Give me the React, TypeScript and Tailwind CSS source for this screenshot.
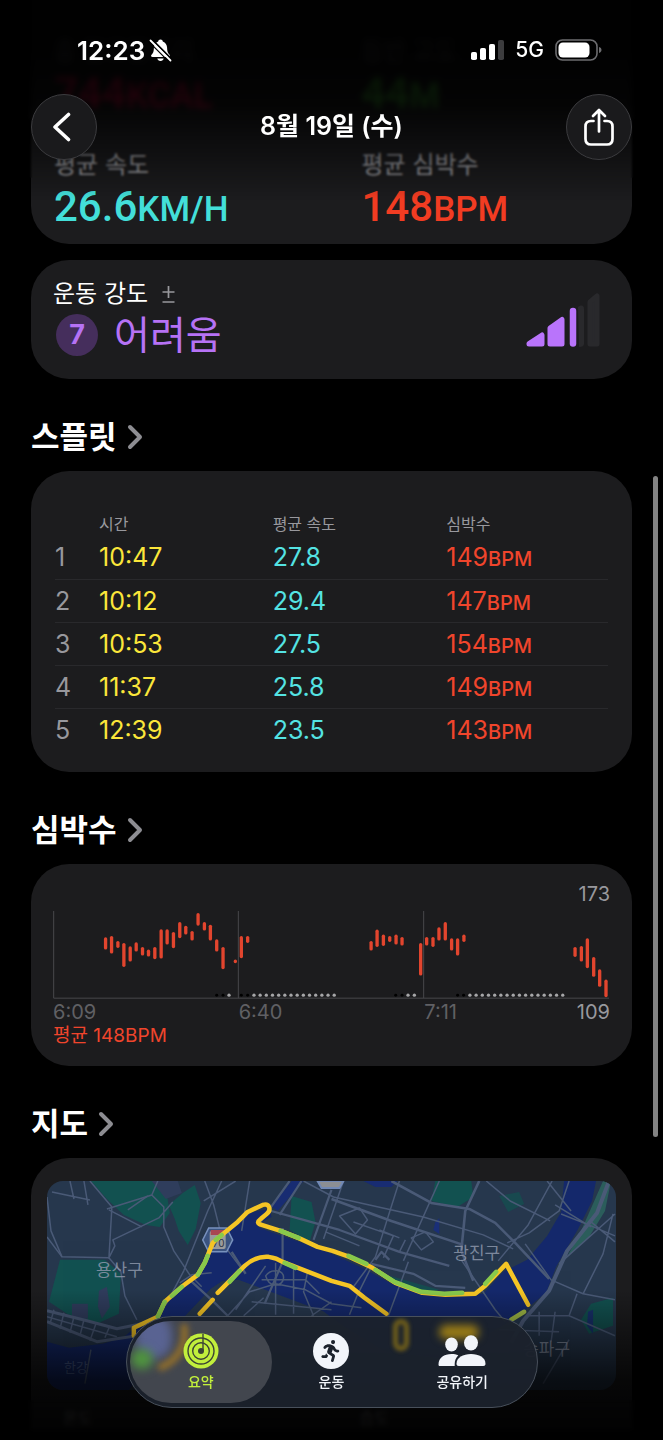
import { FaPersonRunning } from "react-icons/fa6";

const splits = [
  ["1", "10:47", "27.8", "149"],
  ["2", "10:12", "29.4", "147"],
  ["3", "10:53", "27.5", "154"],
  ["4", "11:37", "25.8", "149"],
  ["5", "12:39", "23.5", "143"],
];

const bars: [number, number, number][] = [
  [158, 235, 270], [176, 231, 282], [195, 246, 265], [213, 252, 322], [232, 262, 306],
  [250, 250, 276], [269, 264, 288], [287, 272, 291], [306, 264, 299], [325, 211, 297],
  [343, 211, 255], [362, 219, 266], [381, 189, 236], [399, 200, 225], [418, 216, 243],
  [436, 162, 198], [455, 189, 213], [473, 197, 243], [492, 241, 276], [511, 264, 329],
  [548, 302, 311], [566, 231, 296], [585, 231, 250],
  [956, 246, 273], [974, 212, 262], [993, 227, 259], [1012, 231, 247], [1031, 227, 255],
  [1049, 234, 258], [1105, 252, 348], [1123, 234, 258], [1142, 234, 262], [1160, 205, 243],
  [1179, 189, 243], [1198, 238, 273], [1216, 238, 288], [1235, 227, 247],
  [1569, 264, 292], [1588, 261, 306], [1606, 238, 326], [1625, 294, 352], [1643, 331, 382],
  [1662, 362, 413],
];
const darkDots = [492, 511, 566, 585, 1030, 1049, 1216, 1234];
const lightDots = [
  529,
  ...Array.from({ length: 14 }, (_, i) => 604 + i * 18.55),
  1067, 1086,
  ...Array.from({ length: 16 }, (_, i) => 1253 + i * 18.6),
];

function SectionHeading({ children }: { children: string }) {
  return (
    <h2 className="flex h-[92px] items-center pt-6 text-[31px] font-bold text-white">
      <a href="#" className="flex items-center gap-2.5">
        {children}
        <svg width="16" height="26" viewBox="0 0 16 26" fill="none" aria-hidden="true">
          <path d="M3 3l10 10L3 23" stroke="#8d8d92" strokeWidth="4" strokeLinecap="round" strokeLinejoin="round" />
        </svg>
      </a>
    </h2>
  );
}

function Stat({ label, value, unit, color }: { label: string; value: string; unit: string; color: string }) {
  return (
    <div>
      <dt className="h-8 text-2xl leading-8 text-[#a0a0a5]">{label}</dt>
      <dd className={`mt-0.5 h-12 font-['Roboto'] text-[42px] leading-[48px] font-medium ${color}`}>
        {value}
        <span className="text-[35px]">{unit}</span>
      </dd>
    </div>
  );
}

function StatusBar() {
  return (
    <div className="flex items-center justify-between pt-8 pr-[61px] pl-[77px] text-white">
      <div className="flex h-9 items-center gap-1">
        <span className="text-[26px] font-semibold">12:23</span>
        <svg width="23" height="24" viewBox="0 0 23 24" aria-label="무음">
          <path d="M11.500 1.500c1.300 0 2.200.8 2.300 2 2.700 1 4.200 3.300 4.300 6.200.1 4 .8 5.300 2.500 7.100.8.900.3 2.200-1 2.200H3.500c-1.400 0-1.900-1.300-1-2.200 1.700-1.800 2.300-3.100 2.400-7.100.1-2.900 1.600-5.200 4.300-6.200.1-1.200 1-2 2.300-2z" fill="#fff" />
          <path d="M8.300 20.500h6.400c-.3 1.500-1.500 2.500-3.200 2.500s-2.900-1-3.200-2.500z" fill="#fff" />
          <path d="M2.500 1l20 20" stroke="#000" strokeWidth="1.800" />
          <path d="M1.500 2.500l20 20" stroke="#fff" strokeWidth="1.800" strokeLinecap="round" />
          <path d="M0 3.800l20 20" stroke="#000" strokeWidth="1.200" />
        </svg>
      </div>
      <div className="flex items-center gap-[11px]">
        <svg width="33" height="20" viewBox="0 0 33 20" aria-label="신호 강도">
          <rect x="0" y="12" width="6" height="8" rx="1.800" fill="#fff" />
          <rect x="9" y="8" width="6" height="12" rx="1.800" fill="#fff" />
          <rect x="18" y="4" width="6" height="16" rx="1.800" fill="#fff" />
          <rect x="27" y="0" width="6" height="20" rx="1.800" fill="#3c3c3e" />
        </svg>
        <span className="text-[21px] font-medium">5G</span>
        <svg width="47" height="22" viewBox="0 0 47 22" aria-label="배터리">
          <rect x="1" y="1" width="41" height="20" rx="6.500" fill="none" stroke="#6d6d70" strokeWidth="1.600" />
          <rect x="3.500" y="3.500" width="31" height="15" rx="4.500" fill="#fff" />
          <path d="M44 8c1.600.4 2.500 1.600 2.500 3s-.9 2.600-2.500 3z" fill="#6d6d70" />
        </svg>
      </div>
    </div>
  );
}

function RouteMap() {
  return (
    <svg viewBox="47 1181 570 210" preserveAspectRatio="xMidYMid slice" className="block w-full rounded-2xl" fill="none" role="img" aria-label="운동 경로 지도">
      <rect x="47" y="1181" width="570" height="210" fill="#26374d" />
      <g fill="#125150">
        <path d="M91 1181h67l8 6 4 26-10 14-14-2-22-10-17-16z" />
        <path d="M169 1205l14-12 12-8 6 18-5 26-8 16-9-14-4-12z" />
        <path d="M60 1260h45l16 14-2 40-22 10-30-10-18-12z" />
        <path d="M292 1196l20 6 4 20-6 20-20-12z" />
        <path d="M436 1181h36l2 16-16 10-26-6z" />
        <path d="M500 1196l20-4 5 12-16 8z" opacity=".7" />
        <path d="M592 1304l22-6v28l-24 8-8-14z" />
        <path d="M390 1276l50 14-20 5-24-8z" opacity=".8" />
      </g>
      <g fill="#2f3d5c">
        <path d="M152 1181h26l4 12-16 6z" /><path d="M99 1291l8-4 3 20-8 12-4-12z" /><path d="M72 1304h16v15H72z" />
      </g>
      <path d="M604 1181h8l-6 30-16 26-22 20 14-26z" fill="#2b5d5b" />
      <path
        d="M134 1329l26-15 6-12 16-15 16-12 9-17 8-17 23-19 10-9 22-4 2 8-12 6 0 5 40 14 32 12 35 16 25 14 30 10 30 3 32-3 20-22 24-12 20-24 14-24 3-31h32l-4 20-14 28-22 38-10 26-32 26-70 40-60-8-40-24-22-16-20-7-48-18-16-6-16 1-12 8-50 53-20 32-22 30H47v-62l22 6 34-4 20-6z"
        fill="#14286b"
      />
      <path d="M271 1206l14-16 7-9h12l-26 30z" fill="#182c72" />
      <path d="M364 1181l12 6h16l6-6z" fill="#182c72" /><path d="M436 1222l4-4v16l-6-4z" fill="#1a2f78" />
      <path d="M589 1312l5-2v24l-6-8z" fill="#17306a" />

      <g stroke="#4a5a77" strokeWidth="1.500" strokeLinejoin="round">
        <path d="M47 1197l4 34 11 26 47 1 6-12-2-6 46-22 14-16M90 1181l22 26-3 52M107 1209l45-14 6-14M158 1181l-6 14 12 12v20l10 24 16 24 12 12" />
        <path d="M62 1257l-15-20M109 1258l12 14 4 24 12 24M109 1210l33 17M128 1210l20-14" />
        <path d="M47 1311l40 10 30 8 30-6M47 1322l50 20 40-6" strokeWidth="3" />
        <path d="M54 1310l-4 14M64 1313l-4 16M74 1317l-4 16M84 1320l-4 16M96 1324l-6 17M47 1317l70 20M110 1326l-5 12" />
        <path d="M205 1181l9 24 10 40 18 24M222 1181l-14 30-24 60-18 34M236 1181l-32 20M250 1181l-8 50M180 1283l12-8 20-2" />
        <path d="M190 1280l24 22 14 14M232 1252l14 22" strokeWidth="2.400" />
        <path d="M268 1210l36 10 36 10 60 22 50 14M290 1181l-30 42M302 1181l-22 34M332 1190l-18 50M283 1228v34l-18 42" strokeWidth="2.200" />
        <path d="M304 1181l30 16 90 20 60 18 30 14M344 1181l-20 58M400 1181l-24 76-22 30M440 1181l-36 80M372 1267l-14 28-8 20M409 1262l-20 54" />
        <path d="M332 1199l60 22 72 24M392 1181l40 22 38 6 26 14 20 20 34 36M480 1181l-14 30-4 40 12 30" strokeWidth="2.600" />
        <path d="M487 1181l24 20 40 20M570 1181l-10 30-30 22-22 10M553 1181l-24 44-30 36M548 1181l24 30M462 1260l34 50 10 12" />
        <path d="M340 1216l20-8 8 12-12 14zM380 1230l20 8M412 1238l14-6 8 10-12 8zM354 1222l40 14-10 22M326 1232l34 14M400 1252l6-12" />
        <path d="M372 1264l42 10 22 12 30 2M376 1260l6-8 8 8" strokeWidth="2.200" />
        <path d="M610 1181l-12 32-30 38-18 40-26 30-12 22" strokeWidth="4" />
        <path d="M526 1244l26 36 32 14 32 6M556 1205l36 22M562 1214l30 12 24 10M578 1294l-8 22 46 20M584 1294l20-40 10-40M592 1222l24 20M530 1316h40M540 1312v24M556 1312l-4 30M570 1340l-26 44M500 1330l60 2M560 1264l56-50" />
        <path d="M228 1316l22-24 26-8 30 6 26 14 30 4M236 1310l30-44M244 1316l20-18M276 1263v52M294 1264v50M262 1280h44l14 14M308 1272l-4 20 10 24M332 1302l-20 14M252 1302l80 8M266 1276c6-8 18-6 18 2s-14 12-18-2z" />
        <path d="M91 1350l-6 34M52 1192l38 8M70 1181l4 18M84 1181l4 24" />
      </g>

      <g transform="translate(218 1240)">
        <path d="M-9-12H9l6 12-6 12H-9l-6-12z" fill="#3b5480" stroke="#7891be" strokeWidth="1.500" />
        <rect x="-8" y="-9" width="16" height="18" rx="2" fill="#9a9c9c" /><path d="M-7-10H7v5H-7z" fill="#a94552" />
        <text x="1" y="7" fontSize="10" fill="#2c3547" textAnchor="middle">70</text>
      </g>
      <path d="M318 1181h26l-4 7h-18z" fill="#8b8e93" stroke="#7088b5" strokeWidth="2" />

      <g fill="#8c96aa" fontSize="17" opacity=".85">
        <text x="96" y="1276">용산구</text><text x="454" y="1259">광진구</text>
        <text x="524" y="1355">송파구</text><text x="64" y="1372" fontSize="13" fill="#53699c">한강</text>
      </g>

      <g strokeLinecap="round" strokeLinejoin="round" strokeWidth="4.500" stroke="#f5c525">
        <path d="M134 1336v-8l24-11 7-15 17-15 16-12 7-12 8-20 9-8 16-13 10-10 15-7c7-2 9 5 4 9l-6 5c-4 3-3 5 1 6l19 6 20 8 17 8 15 4 17 6 23 11 23 15 27 10 23 2 30-1 10-8 21-22 22 41" />
        <path d="M200 1314l13-14M218 1293l27-27q11-10 24-9 8 1 14 5l49 19 18 5 15 12 22 16" />
        <path d="M525 1312l-13 8" stroke="#9fb945" />
        <path d="M158 1317l7-15M172 1296l10-9M198 1275l7-12 3-7M216 1240l6-5M230 1282l10-11M285 1263l11 5M281 1231l18 7M349 1256l18 8M376 1270l19 12 27 10 23 2 18-1M486 1284l11-12" stroke="#88c94b" />
      </g>
    </svg>
  );
}

function TabBar() {
  return (
    <nav className="absolute bottom-8 left-1/2 h-[92px] w-[412px] -translate-x-1/2 overflow-hidden rounded-full border border-[#48505b] bg-[#1b222c]/95 px-[9px] text-[14px] font-medium text-[#f2f5fa]">
      <div className="absolute top-[2px] left-[266px] h-[32px] w-[16px] rounded-full border-[5px] border-[#8a7215] opacity-80 blur-[2px]" />
      <div className="absolute top-[8px] left-[312px] h-[14px] w-[40px] rounded-full bg-[#9a7c16] blur-[4px]" />
      <ul className="relative grid h-full grid-cols-3">
        <li className="relative">
          <div className="absolute inset-y-[4px] -inset-x-[6px] overflow-hidden rounded-full bg-[#42464e]">
            <div className="absolute -top-[6px] left-[6px] h-[44px] w-[36px] rounded-full bg-[#596392] blur-[5px]" />
            <div className="absolute -top-[26px] -left-[18px] h-[78px] w-[76px] rotate-[30deg] rounded-[50%] border-[7px] border-transparent border-r-[#94702a] blur-[3px]" />
            <div className="absolute top-[28px] left-[1px] h-[20px] w-[22px] rounded-full bg-[#4f943f] blur-[5px]" />
          </div>
          <a href="#" aria-current="page" className="relative flex h-full flex-col items-center pt-4 text-[#c2ef3c]">
            <svg width="36" height="36" viewBox="0 0 36 36" fill="none" aria-hidden="true">
              <circle cx="18" cy="18" r="17.500" fill="#c2ef3c" />
              <g stroke="#3c4435" strokeWidth="1.400">
                <circle cx="18" cy="18" r="13" /><circle cx="18" cy="18" r="8.300" />
                <path d="M20 1v17" />
              </g>
              <circle cx="18" cy="18" r="3" fill="#3c4435" />
            </svg>
            <span className="mt-[3px] leading-5">요약</span>
          </a>
        </li>
        <li>
          <a href="#" className="flex h-full flex-col items-center pt-4">
            <span className="flex h-9 w-9 items-center justify-center rounded-full bg-[#f2f5fa] text-[#1b222c]">
              <FaPersonRunning size={22} />
            </span>
            <span className="mt-[3px] leading-5">운동</span>
          </a>
        </li>
        <li>
          <a href="#" className="flex h-full flex-col items-center pt-4">
            <svg width="48" height="36" viewBox="0 0 48 36" fill="currentColor" aria-hidden="true">
              <ellipse cx="13.500" cy="11.500" rx="6.300" ry="7" />
              <path d="M.5 31.500C.5 25 6 21 13.500 21c2.500 0 4.800.4 6.800 1.300-2.400 2.500-3.600 5.500-3.600 8.700v2H2c-1 0-1.500-.5-1.500-1.500z" />
              <ellipse cx="33" cy="9.800" rx="7" ry="7.600" />
              <path d="M18.500 30.800C18.500 24.500 25 21 33 21s14.500 3.500 14.500 9.800c0 1.400-.8 2.200-2.200 2.200H20.700c-1.400 0-2.200-.8-2.200-2.200z" />
            </svg>
            <span className="mt-[3px] leading-5">공유하기</span>
          </a>
        </li>
      </ul>
    </nav>
  );
}

export default function App() {
  return (
    <div className="relative h-screen overflow-hidden bg-black font-['Inter','Noto_Sans_CJK_KR',sans-serif]">
      <main className="px-[31px]">
        <section className="rounded-b-[38px] bg-[#1c1c1e] px-[23px] pt-[35px] pb-[13px]">
          <dl className="grid grid-cols-2 gap-x-15 gap-y-8">
            <Stat label="총 킬로칼로리" value="744" unit="KCAL" color="text-[#fa114f]" />
            <Stat label="등반 고도" value="44" unit="M" color="text-[#4ccb3c]" />
            <Stat label="평균 속도" value="26.6" unit="KM/H" color="text-[#43dfd9]" />
            <Stat label="평균 심박수" value="148" unit="BPM" color="text-[#f23c22]" />
          </dl>
        </section>

        <section className="mt-4 flex items-center justify-between rounded-[38px] bg-[#1c1c1e] pt-[18px] pr-8 pb-[19px] pl-[22px]">
          <div>
            <h3 className="flex h-8 items-center gap-3.5 text-2xl text-white">
              운동 강도
              <svg width="13" height="17" viewBox="0 0 13 17" stroke="#98989d" strokeWidth="1.700" aria-hidden="true">
                <path d="M6.500 0v12M.5 6h12M.5 16h12" />
              </svg>
            </h3>
            <p className="flex h-[50px] items-center gap-4 pl-[3px] text-[39px] text-[#b672f5]">
              <span className="flex size-[42px] items-center justify-center rounded-full bg-[#452e5c] text-[27px] font-bold">7</span>
              어려움
            </p>
          </div>
          <svg width="74" height="58" viewBox="0 0 74 58" aria-hidden="true" strokeLinejoin="round">
            <path d="M52 17c4-3 6-1 6 2v35c0 2-2 3-5 3z" fill="#29292c" />
            <path d="M64 12l7-6v48h-7z" fill="#29292c" stroke="#29292c" strokeWidth="5" />
            <g fill="#b974fb" stroke="#b974fb" strokeWidth="5">
              <path d="M3 54v-.500L16 45v9zM24 54V38L36 29.500V54z" />
              <path d="M47 21v32.500" strokeWidth="6.500" strokeLinecap="round" fill="none" />
            </g>
          </svg>
        </section>

        <SectionHeading>스플릿</SectionHeading>
        <section className="rounded-[38px] bg-[#1c1c1e] px-6 pt-[41px] pb-[21px]">
          <table className="w-full table-fixed border-collapse text-left text-[25px]">
            <thead>
              <tr className="h-6 text-base leading-6 text-[#98989d]">
                <th aria-label="구간" className="w-[44px] p-0" />
                <th className="w-[31.4%] p-0 font-normal">시간</th>
                <th className="w-[31.4%] p-0 font-normal">평균 속도</th>
                <th className="p-0 font-normal">심박수</th>
              </tr>
            </thead>
            <tbody>
              {splits.map(([n, time, speed, bpm]) => (
                <tr key={n} className="h-[43px] border-b border-[#29292c] leading-10 last:border-b-0">
                  <td className="p-0 text-[#98989d]">{n}</td>
                  <td className="p-0 text-[#fbe63a]">{time}</td>
                  <td className="p-0 text-[#54e3e3]">{speed}</td>
                  <td className="p-0 text-[#f0452c]">{bpm}<span className="text-xl font-medium">BPM</span></td>
                </tr>
              ))}
            </tbody>
          </table>
        </section>

        <SectionHeading>심박수</SectionHeading>
        <section className="rounded-[38px] bg-[#1c1c1e] px-[22px] py-[18px] text-xl leading-6">
          <p className="text-right text-[#98989d]">173</p>
          <svg viewBox="0 140 1674 282" className="block w-full" role="img" aria-label="심박수 그래프">
            <g stroke="#48484b" strokeWidth="3">
              <path d="M2 417H1671M2 155V417M557 155V417M1114 155V417" />
            </g>
            <g stroke="#e2452e" strokeWidth="10" strokeLinecap="round">
              {bars.map(([x, top, bottom]) => (
                <path key={x} d={`M${x} ${top + 4}V${bottom - 4}`} />
              ))}
            </g>
            {darkDots.map((x) => <circle key={x} cx={x} cy="408" r="4.500" fill="#000" />)}
            {lightDots.map((x) => <circle key={x} cx={x} cy="408" r="5" fill="#a6a6a8" />)}
          </svg>
          <div className="grid grid-cols-3 text-[#606064]">
            <span>6:09</span>
            <span>6:40</span>
            <span className="flex justify-between">7:11<span className="text-[#98989d]">109</span></span>
          </div>
          <p className="text-[19px] text-[#f0452c]">평균 148BPM</p>
        </section>

        <SectionHeading>지도</SectionHeading>
        <section className="rounded-t-[38px] bg-[#1c1c1e] px-4 pt-[23px]">
          <RouteMap />
          <div className="grid grid-cols-2 pt-[16px] text-base leading-6 text-[#98989d]">
            <span className="pl-4">온도</span>
            <span className="pl-7">습도</span>
          </div>
        </section>
      </main>

      <div className="absolute top-[476px] right-[5px] h-[661px] w-[5px] rounded-full bg-[#838383]" />
      <div className="absolute inset-x-0 bottom-0 h-[150px] bg-linear-to-b from-transparent via-black/75 via-60% to-black/95" />
      <div className="absolute inset-x-0 bottom-0 h-[40px] backdrop-blur-[2px]" />

      <div className="absolute inset-x-0 top-0 h-[120px] backdrop-blur-[3px]" />
      <div className="absolute inset-x-0 top-0 h-[178px] backdrop-blur-[1px]" />
      <div className="absolute inset-x-0 top-0 h-[200px] bg-[linear-gradient(to_bottom,rgb(0_0_0/.95)_25%,rgb(0_0_0/.85)_52%,rgb(0_0_0/.4)_78%,transparent)]" />
      <header className="absolute inset-x-0 top-0">
        <StatusBar />
        <div className="flex items-center justify-between px-[31px] pt-[26px] text-white">
          <button aria-label="뒤로" className="flex size-[66px] items-center justify-center rounded-full border border-[#3c3c3f] bg-[#1a1a1c] pr-1">
            <svg width="20" height="30" viewBox="0 0 20 30" fill="none" aria-hidden="true">
              <path d="M16.500 2.500L3 15l13.500 12.500" stroke="#fff" strokeWidth="3.600" strokeLinecap="round" strokeLinejoin="round" />
            </svg>
          </button>
          <h1 className="text-[25px] font-semibold">8월 19일 (수)</h1>
          <button aria-label="공유" className="flex size-[66px] items-center justify-center rounded-full border border-[#3c3c3f] bg-[#1a1a1c]">
            <svg width="30" height="38" viewBox="0 0 30 38" fill="none" stroke="#fff" strokeWidth="2.700" strokeLinecap="round" strokeLinejoin="round" aria-hidden="true">
              <path d="M9.500 13H7c-3.500 0-5.500 2-5.500 5.500V31c0 3.500 2 5.500 5.500 5.500h16c3.500 0 5.500-2 5.500-5.500V18.500c0-3.500-2-5.500-5.500-5.500h-2.500" />
              <path d="M15 23.500V2M9 8l6-6 6 6" />
            </svg>
          </button>
        </div>
      </header>
      <TabBar />
    </div>
  );
}
